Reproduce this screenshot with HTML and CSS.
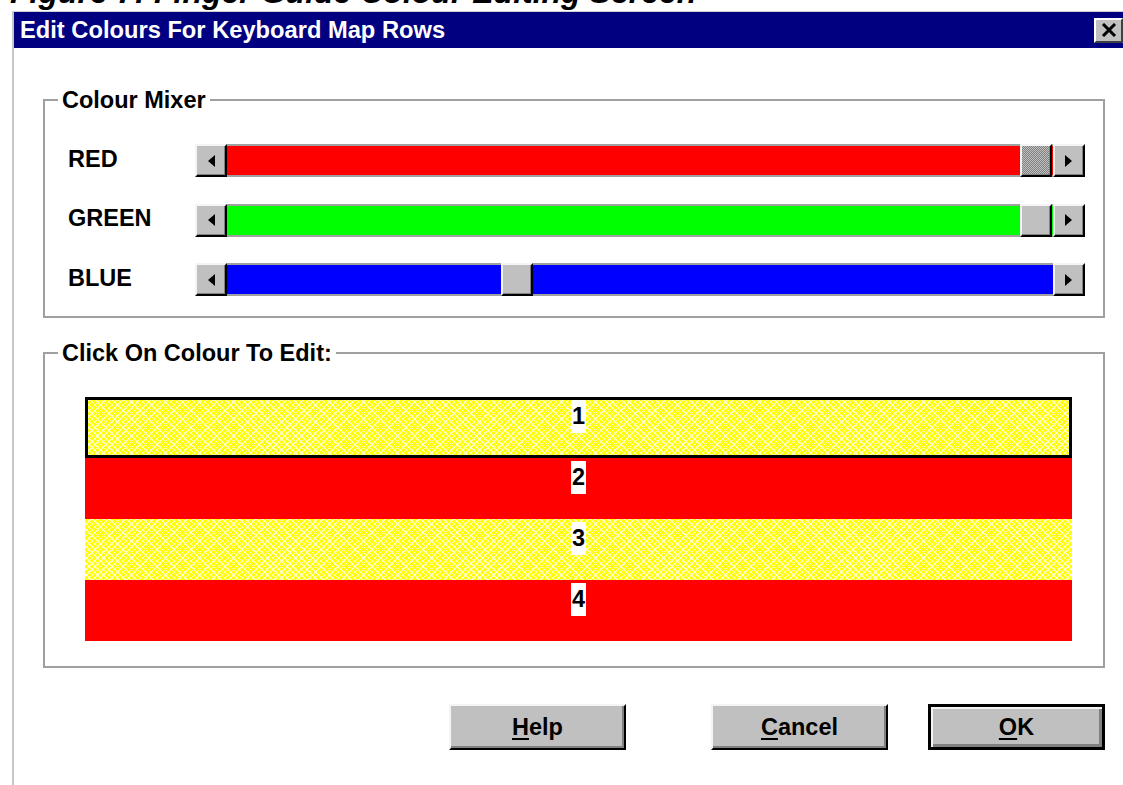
FILE: index.html
```html
<!DOCTYPE html>
<html lang="en">
<head>
<meta charset="utf-8">
<title>Edit Colours For Keyboard Map Rows</title>
<link rel="stylesheet" href="styles.css">
</head>
<body>
<div class="caption"><span>Figure 7: Finger Guide Colour Editing Screen</span></div>

<div class="window">
  <div class="titlebar">
    <span class="title">Edit Colours For Keyboard Map Rows</span>
    <button class="close" type="button" aria-label="Close">
      <svg width="16" height="14" viewBox="0 0 16 14"><path d="M2 1 L14 13 M14 1 L2 13" stroke="#000" stroke-width="3" fill="none"/></svg>
    </button>
  </div>

  <div class="content">
    <fieldset class="group mixer">
      <legend>Colour Mixer</legend>
      <div class="mixer-grid">
        <span class="chan">RED</span>
        <div class="scroll">
          <span class="sbtn"><svg width="8" height="12" viewBox="0 0 8 12"><polygon points="8,0 8,12 1,6" fill="#000"/></svg></span>
          <div class="track red"><span class="thumb dither" style="left: calc((100% - 33px) * 1)"></span></div>
          <span class="sbtn"><svg width="8" height="12" viewBox="0 0 8 12"><polygon points="0,0 0,12 7,6" fill="#000"/></svg></span>
        </div>

        <span class="chan">GREEN</span>
        <div class="scroll">
          <span class="sbtn"><svg width="8" height="12" viewBox="0 0 8 12"><polygon points="8,0 8,12 1,6" fill="#000"/></svg></span>
          <div class="track green"><span class="thumb" style="left: calc((100% - 33px) * 1)"></span></div>
          <span class="sbtn"><svg width="8" height="12" viewBox="0 0 8 12"><polygon points="0,0 0,12 7,6" fill="#000"/></svg></span>
        </div>

        <span class="chan">BLUE</span>
        <div class="scroll">
          <span class="sbtn"><svg width="8" height="12" viewBox="0 0 8 12"><polygon points="8,0 8,12 1,6" fill="#000"/></svg></span>
          <div class="track blue"><span class="thumb" style="left: calc((100% - 33px) * 0.346)"></span></div>
          <span class="sbtn"><svg width="8" height="12" viewBox="0 0 8 12"><polygon points="0,0 0,12 7,6" fill="#000"/></svg></span>
        </div>
      </div>
    </fieldset>

    <fieldset class="group rows">
      <legend>Click On Colour To Edit:</legend>
      <div class="row-list">
        <div class="row yellow selected"><span class="num">1</span></div>
        <div class="row redrow"><span class="num">2</span></div>
        <div class="row yellow"><span class="num">3</span></div>
        <div class="row redrow"><span class="num">4</span></div>
      </div>
    </fieldset>

    <div class="actions">
      <button class="btn help" type="button"><u>H</u>elp</button>
      <button class="btn cancel" type="button"><u>C</u>ancel</button>
      <button class="btn ok default" type="button"><u>O</u>K</button>
    </div>
  </div>
</div>
</body>
</html>
```

FILE: styles.css
```css
html, body {
  margin: 0;
  padding: 0;
  background: #fff;
  overflow: hidden;
}

body {
  width: 1123px;
  height: 785px;
  font-family: "Liberation Sans", Arial, sans-serif;
  font-weight: bold;
  font-size: 23.5px;
  color: #000;
}

/* document caption above the dialog, cut off at the page top */
.caption {
  height: 11px;
  overflow: hidden;
  padding-left: 10px;
}
.caption span {
  display: block;
  margin-top: -24px;
  font-size: 32px;
  line-height: 32px;
  font-style: italic;
  white-space: nowrap;
}

/* dialog frame */
.window {
  margin-left: 12px;
  border-top: 1px solid #d0d0d0;
  border-left: 2px solid #c6c6c6;
  height: 773px;
}

.titlebar {
  height: 36px;
  background: #000080;
  color: #fff;
  display: flex;
  align-items: center;
  justify-content: space-between;
}
.title {
  padding-left: 6px;
  font-size: 23.7px;
  white-space: nowrap;
}
.close {
  width: 29px;
  height: 25px;
  margin: 0;
  padding: 0;
  background: #c0c0c0;
  border: 2px solid;
  border-color: #fff #404040 #404040 #fff;
  display: flex;
  align-items: center;
  justify-content: center;
}

.content {
  padding: 0 18px 0 29px;
}

/* group boxes */
.group {
  margin: 0;
  padding: 0;
  border: 2px solid #a0a0a0;
  min-width: 0;
}
.group legend {
  margin-left: 13px;
  padding: 0 4px;
  line-height: 26px;
}
.mixer {
  margin-top: 39px;
}
.rows {
  margin-top: 22px;
}

.mixer-grid {
  display: grid;
  grid-template-columns: 127px 890px;
  row-gap: 26.5px;
  align-items: center;
  padding: 31px 0 20px 23px;
}
.chan {
  margin-top: -3px;
}

.scroll {
  display: flex;
  height: 33px;
}
.sbtn,
.thumb {
  box-sizing: border-box;
  width: 32px;
  background: #c0c0c0;
  border: 2px solid;
  border-color: #f4f4f4 #000 #000 #f4f4f4;
  box-shadow: inset -1px -1px #808080;
}
.sbtn {
  display: flex;
  align-items: center;
  justify-content: center;
  flex: none;
}
.track {
  flex: 1;
  position: relative;
  border-top: 2px solid #a0a0a0;
  border-bottom: 2px solid #a0a0a0;
}
.track.red { background: #ff0000; }
.track.green { background: #00ff00; }
.track.blue { background: #0000ff; }

.thumb {
  position: absolute;
  top: -2px;
  bottom: -2px;
}
.thumb.dither {
  background-color: #c0c0c0;
  background-image:
    linear-gradient(45deg, #808080 25%, transparent 25%, transparent 75%, #808080 75%),
    linear-gradient(45deg, #808080 25%, transparent 25%, transparent 75%, #808080 75%);
  background-size: 2px 2px;
  background-position: 0 0, 1px 1px;
}

/* colour rows */
.row-list {
  padding: 31px 31px 25px 40px;
}
.row {
  height: 61px;
  display: flex;
  justify-content: center;
  align-items: flex-start;
  box-sizing: border-box;
}
.row.redrow {
  background: #ff0000;
}
.row.yellow {
  background-color: #ffff00;
  background-image:
    repeating-linear-gradient(45deg, rgba(255, 255, 255, 0.7) 0 1px, transparent 1px 4px),
    repeating-linear-gradient(-45deg, rgba(255, 255, 255, 0.7) 0 1px, transparent 1px 4px);
}
.row.selected {
  box-shadow: inset 0 0 0 3px #000;
}
.num {
  margin-top: 3px;
  background: #fff;
  padding: 0 1px;
  line-height: 33px;
}

/* push buttons */
.actions {
  display: flex;
  justify-content: flex-end;
  margin-top: 36px;
}
.btn {
  width: 177px;
  height: 46px;
  margin: 0;
  padding: 0;
  font: inherit;
  color: #000;
  background: #c0c0c0;
  border: 2px solid;
  border-color: #f4f4f4 #000 #000 #f4f4f4;
  box-shadow: inset -2px -2px #808080;
}
.btn u {
  text-decoration-thickness: 2px;
  text-underline-offset: 3px;
}
.help {
  margin-right: 1px;
}
.cancel {
  margin-left: 84px;
}
.ok {
  margin-left: 40px;
}
.btn.default {
  border: 3px solid #000;
  box-shadow: inset 2px 2px #f4f4f4, inset -3px -3px #808080;
}
```
